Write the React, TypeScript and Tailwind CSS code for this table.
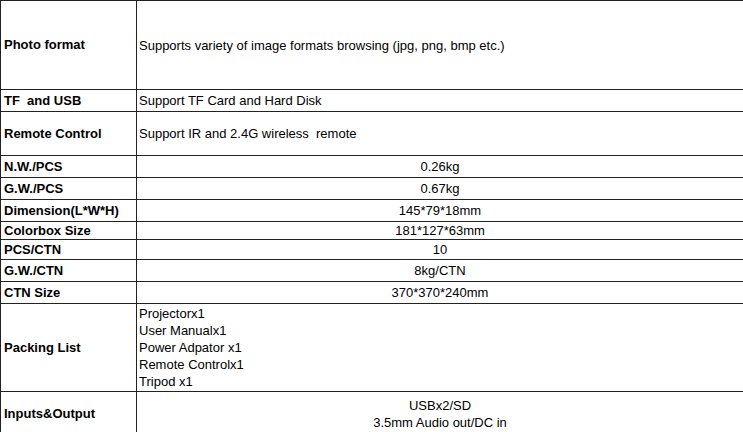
type Row = {
  label: string;
  value: string[];
  h: string;
  align: 'left' | 'center';
};

// Spec sheet rows; heights include the 1px bottom rule.
const ROWS: Row[] = [
  { label: 'Photo format', value: ['Supports variety of image formats browsing (jpg, png, bmp etc.)'], h: 'h-[89px]', align: 'left' },
  { label: 'TF\u00a0 and USB', value: ['Support TF Card and Hard Disk'], h: 'h-[22px]', align: 'left' },
  { label: 'Remote Control', value: ['Support IR and 2.4G wireless\u00a0 remote'], h: 'h-[44px]', align: 'left' },
  { label: 'N.W./PCS', value: ['0.26kg'], h: 'h-[22px]', align: 'center' },
  { label: 'G.W./PCS', value: ['0.67kg'], h: 'h-[22px]', align: 'center' },
  { label: 'Dimension(L*W*H)', value: ['145*79*18mm'], h: 'h-[22px]', align: 'center' },
  { label: 'Colorbox Size', value: ['181*127*63mm'], h: 'h-[18px]', align: 'center' },
  { label: 'PCS/CTN', value: ['10'], h: 'h-[20px]', align: 'center' },
  { label: 'G.W./CTN', value: ['8kg/CTN'], h: 'h-[22px]', align: 'center' },
  { label: 'CTN Size', value: ['370*370*240mm'], h: 'h-[22px]', align: 'center' },
  {
    label: 'Packing List',
    value: ['Projectorx1', 'User Manualx1', 'Power Adpator x1', 'Remote Controlx1', 'Tripod x1'],
    h: 'h-[88px]',
    align: 'left',
  },
  { label: 'Inputs&Output', value: ['USBx2/SD', '3.5mm Audio out/DC in'], h: 'h-[44px]', align: 'center' },
];

export default function App() {
  return (
    <div className="h-[432px] w-[743px] overflow-hidden bg-white font-['Liberation_Sans',Arial,sans-serif] text-[13px] text-black">
      <div className="border-t border-[#222]">
        {ROWS.map((row) => (
          <div key={row.label} className={`flex border-b border-[#222] ${row.h}`}>
            <div className="flex w-[137px] shrink-0 items-center border-x border-[#222] pl-[3px] font-bold">
              {row.label}
            </div>
            <div
              className={`flex flex-1 flex-col justify-center leading-[17px] ${
                row.align === 'center' ? 'items-center' : 'items-start pl-[2px]'
              }`}
            >
              {row.value.map((v) => (
                <span key={v} className="whitespace-pre">
                  {v}
                </span>
              ))}
            </div>
          </div>
        ))}
      </div>
    </div>
  );
}
